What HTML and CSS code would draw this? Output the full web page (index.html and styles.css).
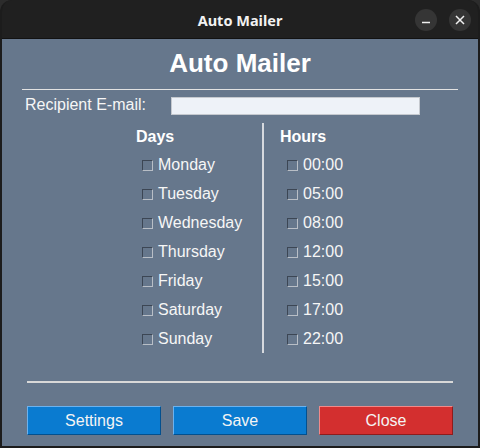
FILE: index.html
```html
<!DOCTYPE html>
<html lang="en">
  <head>
    <title>Auto Mailer</title>
    <link rel="stylesheet" href="styles.css">
  </head>
  <body>
    <div class="window">
      <div class="titlebar">
        <span class="title">Auto Mailer</span>
        <div class="controls">
          <span class="ctl">
            <svg width="10" height="10" viewBox="0 0 10 10"><path d="M1 7.5h8" stroke="#f0f0f0" stroke-width="1.5"/></svg>
          </span>
          <span class="ctl">
            <svg width="10" height="10" viewBox="0 0 10 10"><path d="M1 1l8 8M9 1l-8 8" stroke="#f0f0f0" stroke-width="1.5"/></svg>
          </span>
        </div>
      </div>

      <div class="content">
        <h1 class="heading">Auto Mailer</h1>
        <hr class="rule">

        <div class="recipient">
          <label class="recipient-label">Recipient E-mail:</label>
          <input type="text" class="email-input">
        </div>

        <div class="columns">
          <div class="col days">
            <h3 class="col-title">Days</h3>
            <label class="option"><span class="box"></span>Monday</label>
            <label class="option"><span class="box"></span>Tuesday</label>
            <label class="option"><span class="box"></span>Wednesday</label>
            <label class="option"><span class="box"></span>Thursday</label>
            <label class="option"><span class="box"></span>Friday</label>
            <label class="option"><span class="box"></span>Saturday</label>
            <label class="option"><span class="box"></span>Sunday</label>
          </div>
          <div class="divider"></div>
          <div class="col hours">
            <h3 class="col-title">Hours</h3>
            <label class="option"><span class="box"></span>00:00</label>
            <label class="option"><span class="box"></span>05:00</label>
            <label class="option"><span class="box"></span>08:00</label>
            <label class="option"><span class="box"></span>12:00</label>
            <label class="option"><span class="box"></span>15:00</label>
            <label class="option"><span class="box"></span>17:00</label>
            <label class="option"><span class="box"></span>22:00</label>
          </div>
        </div>

        <hr class="rule rule-bottom">

        <div class="buttons">
          <button class="btn btn-blue">Settings</button>
          <button class="btn btn-blue">Save</button>
          <button class="btn btn-red">Close</button>
        </div>
      </div>
    </div>
  </body>
</html>
```

FILE: styles.css
```css
body {
  margin: 0;
  background-color: #2c2c2c;
  font-family: "Liberation Sans", Arial, sans-serif;
}

/* window frame */
.window {
  width: 480px;
  height: 448px;
  box-sizing: border-box;
  border: 2px solid #1c1c1c;
  border-top: none;
  border-radius: 12px 12px 0 0;
  background-color: #202020;
  overflow: hidden;
}

.titlebar {
  height: 39px;
  box-sizing: border-box;
  padding-top: 1px;
  border-bottom: 1px solid #121212;
  display: grid;
  grid-template-columns: 1fr auto 1fr;
  align-items: center;
}
.title {
  grid-column: 2;
  color: #f2f2f2;
  font-family: "Noto Sans", sans-serif;
  font-weight: bold;
  font-size: 14.5px;
}
.controls {
  grid-column: 3;
  justify-self: end;
  display: flex;
  gap: 12px;
  margin-right: 7px;
}
.ctl {
  width: 22px;
  height: 22px;
  border-radius: 50%;
  background-color: #353535;
  display: flex;
  align-items: center;
  justify-content: center;
}

/* main area */
.content {
  height: 407px;
  background-color: #66778c;
  color: #f6f6f6;
  overflow: hidden;
}
.heading {
  margin: 9px 0 0;
  font-size: 26px;
  line-height: 30px;
  text-align: center;
  color: #ffffff;
}
.rule {
  margin: 11px 20px 0;
  border: none;
  height: 1px;
  background-color: #e2e2e2;
}
.rule-bottom {
  margin: 25px 25px 0;
  height: 2px;
  background-color: #d8d8d8;
}

.recipient {
  display: flex;
  align-items: flex-start;
  margin: 6px 0 0 23px;
}
.recipient-label {
  width: 146px;
  flex: none;
  font-size: 16px;
  line-height: 18px;
}
.email-input {
  width: 249px;
  height: 18px;
  box-sizing: border-box;
  margin: 1px 0 0;
  padding: 0;
  border: 1px solid #c5c9cf;
  background-color: #eef2f8;
}

/* days & hours */
.columns {
  display: flex;
  margin: 8px 0 0 134px;
  padding-bottom: 3px;
}
.col {
  display: flex;
  flex-direction: column;
  padding-top: 5px;
}
.days {
  width: 126px;
}
.hours {
  padding-left: 16px;
}
.divider {
  width: 2px;
  background-color: #d6d9de;
}
.col-title {
  margin: 0 0 4px;
  font-size: 16px;
  line-height: 18px;
  color: #ffffff;
}
.option {
  display: flex;
  align-items: center;
  height: 29px;
  font-size: 16px;
  padding-left: 6px;
}
.hours .option {
  padding-left: 7px;
}
.box {
  width: 11px;
  height: 11px;
  box-sizing: border-box;
  margin: 2px 5px 0 0;
  border: 1px solid;
  border-color: #3c4654 #b8bec6 #b8bec6 #3c4654;
}

/* bottom buttons */
.buttons {
  display: flex;
  gap: 12px;
  margin: 23px 0 0 25px;
}
.btn {
  width: 134px;
  height: 29px;
  box-sizing: border-box;
  border: 1px solid;
  font-family: "Liberation Sans", Arial, sans-serif;
  font-size: 16px;
  color: #f4f4f4;
  padding: 0;
}
.btn-blue {
  background-color: #0a7bd0;
  border-color: #6cb2ee #03508e #03508e #6cb2ee;
}
.btn-red {
  background-color: #d32f2f;
  border-color: #f08a8a #8e1c1c #8e1c1c #f08a8a;
}
```
